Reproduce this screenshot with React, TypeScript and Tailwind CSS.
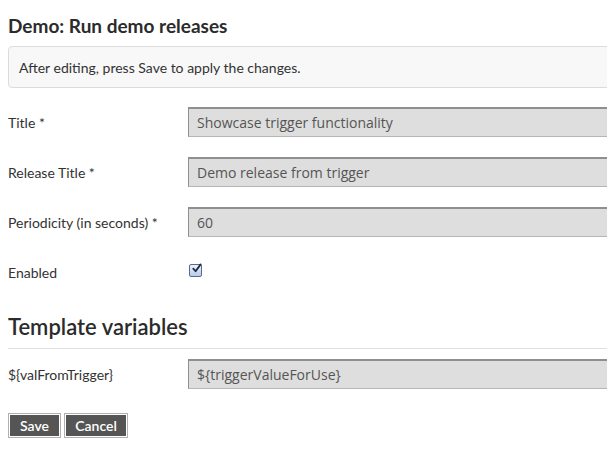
import React from 'react';

const fields = [
  { label: 'Title *', value: 'Showcase trigger functionality' },
  { label: 'Release Title *', value: 'Demo release from trigger' },
  { label: 'Periodicity (in seconds) *', value: '60' },
];

const Field = ({ label, value }: { label: string; value: string }) => (
  <div className="flex h-[50px] items-center">
    <label className="w-[180px] shrink-0 text-[14px] text-[#333]">{label}</label>
    <input
      readOnly
      value={value}
      className="h-[30px] w-[480px] shrink-0 border border-t-2 border-[#b5b5b5] border-t-[#8f8f8f] border-l-[#8f8f8f] bg-[#dedede] px-2 text-[14px] text-[#555] outline-none [font-family:'Open_Sans',sans-serif]"
    />
  </div>
);

const CheckBox = () => (
  <span className="mb-[3px] ml-px flex h-[13px] w-[13px] items-center justify-center rounded-[2px] border border-[#5a6a8a] bg-gradient-to-b from-[#eef3fb] to-[#b9cbe6]">
    <svg viewBox="0 0 12 12" className="h-[13px] w-[13px] -translate-y-[2px] translate-x-[1px]">
      <path d="M2.5 6.2 L5 9 L10.5 1.5" fill="none" stroke="#1d2b4a" strokeWidth="2" strokeLinecap="round" strokeLinejoin="round" />
    </svg>
  </span>
);

export default function App() {
  return (
    <div className="h-[449px] w-[607px] overflow-hidden bg-white [font-family:Lato,sans-serif]">
      <div className="w-[680px] pl-2">
        {/* Heading */}
        <h1 className="pt-[14px] text-[19px] font-bold leading-[24px] text-[#2b2b2b]">Demo: Run demo releases</h1>

        {/* Info box */}
        <div className="mt-[8px] flex h-[42px] items-center rounded border border-[#dcdcdc] bg-[#f8f8f8] px-[10px] text-[14px] text-[#333]">
          After editing, press Save to apply the changes.
        </div>

        {/* Form */}
        <div className="mt-[9px]">
          {fields.map((f) => (
            <Field key={f.label} label={f.label} value={f.value} />
          ))}
          <div className="flex h-[50px] items-center">
            <label className="w-[180px] shrink-0 text-[14px] text-[#333]">Enabled</label>
            <CheckBox />
          </div>
        </div>

        {/* Template variables */}
        <h2 className="mt-[15px] pb-[6px] text-[22px] font-semibold leading-[30px] text-[#2b2b2b]">Template variables</h2>
        <div className="border-t border-[#e0e0e0]" />
        <Field label="${valFromTrigger}" value="${triggerValueForUse}" />

        {/* Actions */}
        <div className="mt-[14px] flex gap-[3px]">
          <button className="border border-[#b0b0b0] bg-white p-px">
            <span className="flex h-[21px] w-[49px] items-center justify-center bg-[#555] text-[14px] font-semibold text-white">Save</span>
          </button>
          <button className="border border-[#b0b0b0] bg-white p-px">
            <span className="flex h-[21px] w-[60px] items-center justify-center bg-[#555] text-[14px] font-semibold text-white">Cancel</span>
          </button>
        </div>
      </div>
    </div>
  );
}
